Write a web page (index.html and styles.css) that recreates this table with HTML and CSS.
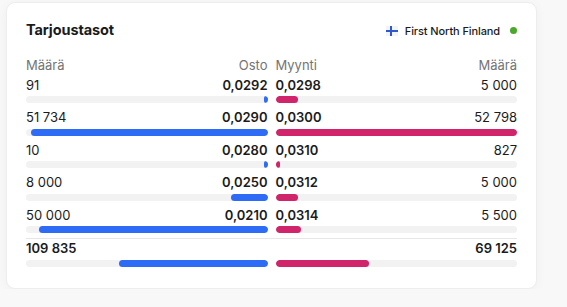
FILE: index.html
```html
<!DOCTYPE html>
<html lang="fi">
<head>
<meta charset="utf-8">
<title>Tarjoustasot</title>
<link rel="stylesheet" href="styles.css">
</head>
<body>
<div class="page">
  <section class="card">
    <header class="card-head">
      <h2 class="title">Tarjoustasot</h2>
      <div class="market">
        <svg class="flag" width="12" height="10" viewBox="0 0 12 10" aria-hidden="true">
          <rect x="0" y="0" width="12" height="10" fill="#f3f4f6"/>
          <rect x="4" y="0" width="2" height="10" fill="#2e57d0"/>
          <rect x="0" y="4" width="12" height="2" fill="#2e57d0"/>
        </svg>
        <span class="market-name">First North Finland</span>
        <span class="dot"></span>
      </div>
    </header>

    <div class="book">
      <div class="row head">
        <div class="cell bid"><div class="line"><span>Määrä</span><span>Osto</span></div></div>
        <div class="cell ask"><div class="line"><span>Myynti</span><span>Määrä</span></div></div>
      </div>

      <div class="row">
        <div class="cell bid"><div class="line"><span>91</span><span class="price">0,0292</span></div><div class="track"><div class="fill" style="width:0.2%"></div></div></div>
        <div class="cell ask"><div class="line"><span class="price">0,0298</span><span>5 000</span></div><div class="track"><div class="fill" style="width:9.5%"></div></div></div>
      </div>

      <div class="row">
        <div class="cell bid"><div class="line"><span>51 734</span><span class="price">0,0290</span></div><div class="track"><div class="fill" style="width:98%"></div></div></div>
        <div class="cell ask"><div class="line"><span class="price">0,0300</span><span>52 798</span></div><div class="track"><div class="fill" style="width:100%"></div></div></div>
      </div>

      <div class="row">
        <div class="cell bid"><div class="line"><span>10</span><span class="price">0,0280</span></div><div class="track"><div class="fill" style="width:0.02%"></div></div></div>
        <div class="cell ask"><div class="line"><span class="price">0,0310</span><span>827</span></div><div class="track"><div class="fill" style="width:1.6%"></div></div></div>
      </div>

      <div class="row">
        <div class="cell bid"><div class="line"><span>8 000</span><span class="price">0,0250</span></div><div class="track"><div class="fill" style="width:15.2%"></div></div></div>
        <div class="cell ask"><div class="line"><span class="price">0,0312</span><span>5 000</span></div><div class="track"><div class="fill" style="width:9.5%"></div></div></div>
      </div>

      <div class="row">
        <div class="cell bid"><div class="line"><span>50 000</span><span class="price">0,0210</span></div><div class="track"><div class="fill" style="width:94.7%"></div></div></div>
        <div class="cell ask"><div class="line"><span class="price">0,0314</span><span>5 500</span></div><div class="track"><div class="fill" style="width:10.4%"></div></div></div>
      </div>

      <div class="row total">
        <div class="cell bid"><div class="line"><span class="sum">109 835</span><span></span></div><div class="track"><div class="fill" style="width:61.4%"></div></div></div>
        <div class="cell ask"><div class="line"><span></span><span class="sum">69 125</span></div><div class="track"><div class="fill" style="width:38.6%"></div></div></div>
      </div>
    </div>
  </section>
</div>
</body>
</html>
```

FILE: styles.css
```css
* { box-sizing: border-box; }

html, body {
  margin: 0;
  padding: 0;
  background: #f8f8f8;
  font-family: Inter, "Noto Sans", "Liberation Sans", sans-serif;
  color: #1b1b1b;
}

.page {
  padding: 2px 0 0 6px;
}

.card {
  width: 531px;
  height: 287px;
  background: #ffffff;
  border: 1px solid #ededed;
  border-radius: 9px;
  box-shadow: 0 2px 12px rgba(0, 0, 0, 0.04);
  padding: 17px 19px 0 19px;
}

.card-head {
  display: flex;
  align-items: center;
  justify-content: space-between;
  height: 20px;
}

.title {
  margin: 0;
  font-size: 14.5px;
  line-height: 20px;
  font-weight: 700;
  letter-spacing: -0.1px;
}

.market {
  display: flex;
  align-items: center;
  padding-top: 1px;
}

.flag {
  display: block;
  margin-right: 7px;
}

.market-name {
  font-size: 11px;
  font-weight: 500;
  line-height: 14px;
  letter-spacing: -0.1px;
}

.dot {
  width: 7px;
  height: 7px;
  border-radius: 50%;
  background: #4ba82c;
  margin-left: 10px;
}

.book {
  margin-top: 15.6px;
  font-size: 13px;
}

.row {
  display: grid;
  grid-template-columns: 1fr 1fr;
  column-gap: 8px;
  padding-bottom: 5px;
}

.row.head {
  padding-bottom: 2px;
  color: #747474;
}

.line {
  display: flex;
  justify-content: space-between;
  height: 18px;
  line-height: 18px;
  white-space: nowrap;
}

.price {
  font-weight: 600;
}

.sum {
  font-weight: 600;
}

.track {
  display: flex;
  height: 7px;
  margin-top: 2.5px;
  background: #f2f2f2;
  border-radius: 4px;
  overflow: hidden;
}

.bid .track {
  justify-content: flex-end;
}

.fill {
  height: 100%;
  min-width: 4px;
  border-radius: 4px;
}

.bid .fill {
  background: #2f6cf6;
}

.ask .fill {
  background: #d0246b;
}

.row.total {
  border-top: 1px solid #e6e6e6;
  padding-top: 0;
}
```
